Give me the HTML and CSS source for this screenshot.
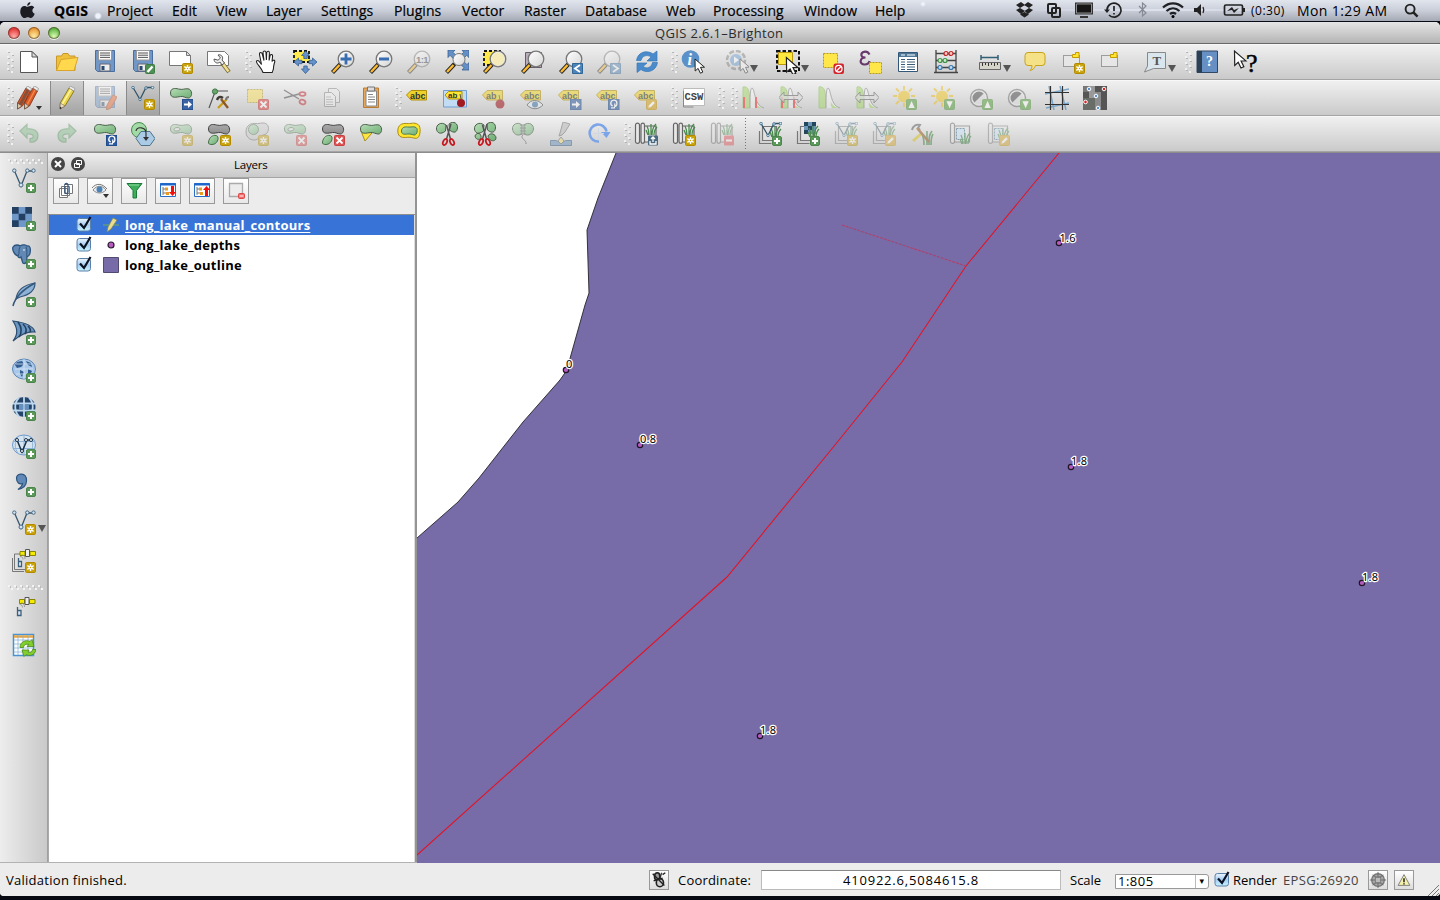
FILE: index.html
```html
<!DOCTYPE html>
<html lang="en">
<head>
<meta charset="utf-8">
<title>QGIS 2.6.1-Brighton</title>
<link rel="stylesheet" href="styles.css">
</head>
<body>
<svg class="sprite" aria-hidden="true">
<defs>
<linearGradient id="gr" x1="0" y1="0" x2="1" y2="1"><stop offset="0" stop-color="#b4dcb4"/><stop offset="1" stop-color="#6fae74"/></linearGradient>
<linearGradient id="gy" x1="0" y1="0" x2="0" y2="1"><stop offset="0" stop-color="#aaa"/><stop offset="1" stop-color="#8e8e8e"/></linearGradient>
<linearGradient id="lens" x1="0" y1="0" x2="1" y2="1"><stop offset="0" stop-color="#fff"/><stop offset="1" stop-color="#d4d6d4"/></linearGradient>
<linearGradient id="chk" x1="0" y1="0" x2="0" y2="1"><stop offset="0" stop-color="#eef6fd"/><stop offset=".5" stop-color="#a5cdf3"/><stop offset="1" stop-color="#c9f2ff"/></linearGradient>
<g id="b-star"><rect x="13.5" y="13.5" width="10" height="10" rx="1.2" fill="#c9a20c" stroke="#b18a00"/><path d="M18.5 15v7M15.3 16.7l6.4 3.6M15.3 20.3l6.4-3.6" stroke="#fff" stroke-width="1.4"/><circle cx="18.5" cy="18.5" r="1.9" fill="#fff"/><circle cx="18.5" cy="18.5" r=".7" fill="#c9a20c"/></g>
<g id="b-plus"><rect x="14.5" y="14.5" width="9" height="9" rx="1.5" fill="#5c9a5c" stroke="#4b854b"/><path d="M19 16v6M16 19h6" stroke="#fff" stroke-width="2"/></g>
<g id="b-x"><rect x="13.5" y="13.5" width="10" height="10" rx="1" fill="#dd5252" stroke="#c94040"/><path d="M15.5 15.5l6 6M21.5 15.5l-6 6" stroke="#fff" stroke-width="1.8"/></g>
<g id="b-pen"><rect x="13.5" y="13.5" width="10" height="10" rx="1" fill="#d9a520" stroke="#c49513"/><path d="M15.3 21.8l.8-2.5 4-4 1.7 1.7-4 4z" fill="#fff"/></g>
<g id="b-arr"><rect x="13.5" y="13.5" width="10.5" height="10" fill="#3a63a6" stroke="#27508f"/><path d="M15 17.5h4v-2.5l4 3.5-4 3.500v-2.500h-4z" fill="#fff"/></g>
<g id="b-rot"><rect x="13.5" y="13.500" width="10.500" height="10" fill="#2f5ba0" stroke="#214c8c"/><path d="M16 21.800h4M21.800 17.500a3 3 0 1 0-4 2.500M21.800 17.500a2.500 2.500 0 0 1-2 3v-3" fill="none" stroke="#fff" stroke-width="1.300"/></g>
<g id="b-up"><rect x="13.500" y="13.500" width="10" height="10" rx="1" fill="#62a34a" stroke="#5b9a44"/><path d="M15.500 22h6.200l-3.100-7z" fill="#fff"/></g>
<g id="b-dn"><rect x="13.500" y="13.500" width="10" height="10" rx="1" fill="#62a34a" stroke="#5b9a44"/><path d="M15.500 15.200h6.200l-3.100 7z" fill="#fff"/></g>
<path id="blob" d="M1.500 6c0-5 4.500-5 8-4 4 1.200 6-.6 9.500-.2 5 .6 4.500 9.200.3 9.200-3.300 0-4.300-2-7.800-1.500S1.500 12 1.500 6z"/>
<path id="hole" fill-rule="evenodd" d="M1.500 6c0-5 4.500-5 8-4 4 1.200 6-.6 9.500-.2 5 .6 4.500 9.200.3 9.200-3.300 0-4.300-2-7.800-1.500S1.500 12 1.500 6zM5 6.500c0 2.500 6 1.500 6-.5s-6-2-6 .5z"/>
<path id="leaf" d="M1.500 20c1-5 4-7 7.500-6.500 4 .6 2 9-4 9-2.500 0-3.700-.5-3.500-2.500z"/>
<path id="cursor" d="M0 0l.2 12 2.900-2.600 2.300 4.800 2.400-1.100-2.300-4.800 4-.1z" fill="#fff" stroke="#222" stroke-width="1"/>
<g id="glass"><path d="M9.500 14l-8 8.500" stroke="#222" stroke-width="4.200"/><path d="M8.500 15l-6.500 7" stroke="#fdbb30" stroke-width="2.400"/><circle cx="15" cy="9" r="7.800" fill="url(#lens)" stroke="#777" stroke-width="1.300"/></g>
<g id="floppy"><path d="M2.500.5h19v21h-17l-2-2z" fill="#7097c6" stroke="#4a6e9f"/><path d="M5.500.5h13v9.500h-13z" fill="#fafafa" stroke="#999"/><path d="M7 3h10M7 5.200h10M7 7.400h10" stroke="#555"/><path d="M7 14h10v7h-10z" fill="#eee" stroke="#667"/><path d="M8.500 16h3v4h-3z" fill="#29496f"/></g>
<g id="pencil"><path d="M14 2l5 3-9 15-5 3 .3-6z" fill="#e9d34b" stroke="#776817" stroke-width=".8"/><path d="M16 3.500L7 18.500" stroke="#fff4a0" stroke-width="1.500"/><path d="M14 2l1-2 5 2.500-1 2.500z" fill="#eee" stroke="#888" stroke-width=".6"/><path d="M5.300 17l4.700 3-5 3z" fill="#e8dbb8" stroke="#766" stroke-width=".6"/><path d="M5 20.800v2.200l1.800-1z" fill="#222"/></g>
<g id="vee"><path d="M2.500 3L9 18 15 3h6.500" fill="none" stroke="#39586f" stroke-width="1.300"/><g fill="#d9e5ee" stroke="#456a88"><circle cx="2.300" cy="2.600" r="1.700"/><circle cx="9" cy="17" r="2"/><circle cx="15.300" cy="2.600" r="1.700"/><circle cx="21.500" cy="2.600" r="1.700"/></g></g>
<g id="smallvee"><path d="M2 1.500l7 12 6-12h6.500" fill="none" stroke="#315468" stroke-width="1.300"/><g fill="#d9e5ee" stroke="#31678a" stroke-width=".8"><circle cx="2" cy="1.500" r="1.300"/><circle cx="9" cy="13.500" r="1.200"/><circle cx="15" cy="2" r="1.300"/><circle cx="21.500" cy="1.500" r="1.300"/></g></g>
<g id="grass"><path d="M15 13c0-5-1-7-2-9M17 13V2M18 13c0-5 1-8 4-11M20 13c0-3 1-6 3-8M14 13l-2-5" fill="none" stroke="#4a8a4e" stroke-width="1.300"/></g>
<g id="tagshape"><path d="M1.500 9L6 4.500h15.500v9.500H6z" fill="#ecd22a" stroke="#b09006"/></g>
<g id="frames"><path d="M1.500 9v12.500h12" fill="none" stroke="#777" stroke-width="1.200"/><path d="M4.500 4.500h14v14h-14z" fill="#e5e5e5" fill-opacity=".5" stroke="#777" stroke-width="1.200"/></g>
<g id="scroll"><path d="M6.500 4h15v16h-15z" fill="#e7e7e7" stroke="#777" stroke-width="1.200"/><path d="M2.500 3c0-2.500 4-2.500 4 0v16.500c0 2.500-4 2.500-4 0z" fill="#e7e7e7" stroke="#777" stroke-width="1.200"/></g>
<g id="scroll2"><path d="M10 4h12v16H8" fill="#e7e7e7" stroke="#666" stroke-width="1.200"/><path d="M1.500 3c0-2.500 4-2.500 4 0v16.500c0 2.500-4 2.500-4 0zM7 3c0-2.500 3.500-2.500 3.500 0v16c0 3-3.500 3-3.500 0z" fill="#e7e7e7" stroke="#666" stroke-width="1.200"/></g>
<g id="hist"><path d="M2 22V1c4-1 6 2 6.500 9L9 22z" fill="#a9d873" stroke="#8fc060"/><path d="M9 22c0-9 0-20 2-20 3 0 2 18 12 20" fill="#fff" fill-opacity=".6" stroke="#8a8a8a"/><path d="M15 22c-2-4-1-6-1-6s2 5 8 6z" fill="#a9d873"/></g>
<path id="dbl" d="M0 11.500L5 6v3.500h14V6l5 5.500L19 17v-3.500H5V17z" fill="#ddd" fill-opacity=".7" stroke="#666"/>
<g id="sun"><path d="M11 0v4M11 17v4M0 10h4M18 10h4M3 2.500l3 3M19 2.500l-3 3M3 18l3-3" stroke="#ecc028" stroke-width="1.800"/><circle cx="11" cy="10.500" r="6" fill="#f0c831"/></g>
<g id="contrast"><circle cx="10" cy="12" r="8.500" fill="#eee" stroke="#777" stroke-width="1.500"/><circle cx="10" cy="12" r="6.500" fill="#ddd"/><path d="M14.600 7.400A6.500 6.500 0 1 0 5.400 16.600z" fill="#555"/></g>
<g id="scissors"><path d="M9.500 3l4 14M14 2l-4.500 15" stroke="#555" stroke-width="1.500"/><g fill="none" stroke="#c71820" stroke-width="1.800"><ellipse cx="8" cy="20" rx="1.800" ry="3.200" transform="rotate(25 8 20)"/><ellipse cx="15" cy="20" rx="1.800" ry="3.200" transform="rotate(-25 15 20)"/></g></g>
<g id="sat"><path d="M8 3.500h5v4H8zM18 3.500h5.500v4H18z" fill="#f4eb00" stroke="#8a8500"/><path d="M13.500 1.500h4v7h-4z" fill="#eee" stroke="#555"/><path d="M8 8.500c2 0 3 1 3 3M9.500 7c3 0 3.500 2 3.500 4" fill="none" stroke="#888" stroke-width=".8"/></g>
<g id="gridp" fill="#f0f0f0"><path d="M0 0h2v2H0zM4 3h2v2H4zM0 6h2v2H0zM4 9h2v2H4zM0 12h2v2H0zM4 15h2v2H4zM0 18h2v2H0zM4 21h2v2H4z"/><path fill="#b4b4b4" d="M1 2h2v1H1zM5 5h2v1H5zM1 8h2v1H1zM5 11h2v1H5zM1 14h2v1H1zM5 17h2v1H5zM1 20h2v1H1z"/></g>
</defs>
<symbol id="i-grip" viewBox="0 0 7 24"><use href="#gridp"/></symbol>
<symbol id="i-hgrip" viewBox="0 0 36 6"><path d="M0 0h2v2H0zM6 0h2v2H6zM12 0h2v2h-2zM18 0h2v2h-2zM24 0h2v2h-2zM30 0h2v2h-2zM3 3h2v2H3zM9 3h2v2H9zM15 3h2v2h-2zM21 3h2v2h-2zM27 3h2v2h-2zM33 3h2v2h-2z" fill="#f4f4f4"/><path d="M2 1h1v2H2zM8 1h1v2H8zM14 1h1v2h-1zM20 1h1v2h-1zM26 1h1v2h-1zM32 1h1v2h-1z" fill="#bbb"/></symbol>
<symbol id="i-new" viewBox="0 0 24 24"><path d="M3.500 1.500h11.500l5.500 5.500v15.500h-17z" fill="#fff" stroke="#555"/><path d="M15 1.500V7h5.500z" fill="#ddd" stroke="#555"/></symbol>
<symbol id="i-open" viewBox="0 0 24 24"><path d="M1.500 20.500V6h5l1.500-2.500h5L14.500 6H20v14.500z" fill="#eec03c" stroke="#c9982d"/><path d="M1.500 20.500L6 9.500l17-2-4 13z" fill="#ffd84e" stroke="#d9a52c"/></symbol>
<symbol id="i-save" viewBox="0 0 24 24"><use href="#floppy"/></symbol>
<symbol id="i-saveas" viewBox="0 0 24 24"><use href="#floppy"/><rect x="14.500" y="14.500" width="9" height="9" rx="1" fill="#4f9155" stroke="#3e7a45"/><path d="M16.500 22l5-5.500" stroke="#fff" stroke-width="2.400"/></symbol>
<symbol id="i-composer" viewBox="0 0 24 24"><path d="M.5 1.500h17l4 4v10h-21z" fill="#fff" stroke="#777"/><path d="M17.500 1.500v4h4z" fill="#ddd" stroke="#777"/><use href="#b-star"/></symbol>
<symbol id="i-manager" viewBox="0 0 24 24"><path d="M.5 1.500h17l4 4v10h-21z" fill="#fff" stroke="#777"/><path d="M15 13l7 9" stroke="#7c6d32" stroke-width="4.200"/><path d="M16 14l5.500 7.500" stroke="#eedc90" stroke-width="2.500"/><path d="M7 9c0 4 4 5 6 3l2 3 2.500-2-2.500-3c2-3-1-6-4-5l2.500 3-2.500 2.200z" fill="#eee" stroke="#555"/></symbol>
<symbol id="i-pan" viewBox="0 0 24 24"><path d="M8 22.500c-1-4-6-8-6.500-10.500-.3-2 2-2 3.500.5l1.500 2L4.500 4.500c-.3-2.500 2.200-2.500 2.800-.5L8 2.500c.3-2 2.700-2 3 0L11.500 2c.6-1.600 2.600-1.300 2.800.5l.2 2.500c.8-1.600 3-1 2.800.7l-.2 3.800c1-1.600 3-.8 2.500 1-1 3.500-1.300 4.500-1.300 7 0 2-1 3.500-1.300 5z" fill="#fff"/><path d="M8 22.500c-1-4-6-8-6.500-10.500-.3-2 2-2 3.500.5l1.500 2L4.500 4.500c-.3-2.500 2.200-2.500 2.800-.5l1.700 6.500L8 2.500c.3-2 2.700-2 3 0l.4 7.500.3-7.500c.6-1.800 2.600-1.500 2.700.3l-.3 7.700 1-5c.8-1.600 2.700-1 2.500.7l-.6 5.300c1-2 3.300-1.800 2.700.5-.8 3-1.200 4-1.200 6 0 2-1 3-1.300 4.500z" fill="none" stroke="#222" stroke-width="1.100"/></symbol>
<symbol id="i-pansel" viewBox="0 0 24 24"><path d="M1 1h15v11H1z" fill="#ffe94d" stroke="#111" stroke-width="1.800" stroke-dasharray="3 2"/><path d="M12.500 1l4 4.500h-2.300v3h-3.400v-3H8.500zM12.500 23.500l-4-4.500h2.300v-3h3.400v3h2.300zM1 12l4.500-4v2.300h3.500v3.400H5.500V16zM24 12l-4.500-4v2.300H16v3.400h3.500V16z" fill="#6793ca" stroke="#345f95" stroke-width=".8"/></symbol>
<symbol id="i-zin" viewBox="0 0 24 24"><use href="#glass"/><path d="M15 3.500v11M9.500 9h11" stroke="#386db1" stroke-width="2.800"/></symbol>
<symbol id="i-zout" viewBox="0 0 24 24"><use href="#glass"/><path d="M10 9h10" stroke="#386db1" stroke-width="2.800"/></symbol>
<symbol id="i-zfull" viewBox="0 0 24 24"><path d="M3 0h7L8 2.300l4 4-3 3-4-4L3 7.500zM24 0v7.500l-2.300-2.200-4 4-3-3 4-4L17 0zM24 20h-7l2-2.300-4-4 3-3 4 4 2-2.200z" fill="#6590c6" stroke="#375f93" stroke-width=".8"/><path d="M9.500 14l-8 8.500" stroke="#222" stroke-width="4.200"/><path d="M8.500 15l-6.500 7" stroke="#fdbb30" stroke-width="2.400"/><circle cx="14" cy="9.500" r="6" fill="url(#lens)" stroke="#777"/></symbol>
<symbol id="i-zsel" viewBox="0 0 24 24"><path d="M1 1h16v14H1z" fill="#ffe84a" stroke="#111" stroke-width="1.800" stroke-dasharray="3 2"/><use href="#glass"/><circle cx="15" cy="9" r="6.500" fill="#f4ebb9"/></symbol>
<symbol id="i-zlay" viewBox="0 0 24 24"><path d="M4.500 2.500h16v15h-16z" fill="#b8adb8" stroke="#675b68"/><use href="#glass"/></symbol>
<symbol id="i-zlast" viewBox="0 0 24 24"><use href="#glass"/><path d="M13.500 13.500h10v10h-10z" fill="#4c83b8" stroke="#316797"/><path d="M21 15l-5 3.500 5 3.500" fill="none" stroke="#fff" stroke-width="1.800"/></symbol>
<symbol id="i-znext" viewBox="0 0 24 24"><use href="#glass"/><path d="M13.500 13.500h10v10h-10z" fill="#4c83b8" stroke="#316797"/><path d="M16 15l5 3.500-5 3.500" fill="none" stroke="#fff" stroke-width="1.800"/></symbol>
<symbol id="i-refresh" viewBox="0 0 24 24"><path d="M1.500 10.500C3 1 13 0 18 4l4-3v10h-10l4-4c-4-3-9-1-10 3.500zM22.500 12.500C21 22 11 23.500 6 19.500l-4 3v-9.500h10l-4 3.500c4 3 8.500 1 9.500-4z" fill="#4a8bcb" stroke="#3879b8" stroke-width=".7"/></symbol>
<symbol id="i-ident" viewBox="0 0 24 24"><circle cx="9.500" cy="9" r="8.800" fill="#5b91c9"/></symbol>
<symbol id="i-action" viewBox="0 0 24 24"><circle cx="11" cy="10" r="9" fill="#ddd" stroke="#777" stroke-width="2.500" stroke-dasharray="5 2"/><circle cx="11" cy="10" r="6" fill="#5d95d0"/><path d="M9 6.500v7l5-3.500z" fill="#fff"/><use href="#cursor" x="15" y="9"/></symbol>
<symbol id="i-select" viewBox="0 0 26 24"><path d="M2 1h22v20H2z" fill="#ddd" stroke="#111" stroke-width="2" stroke-dasharray="3.500 2"/><path d="M3.500 2.500h14v12h-14z" fill="#ffe840" stroke="#bb990c"/><use href="#cursor" x="12" y="8" transform="translate(-3 -2) scale(1.200)"/></symbol>
<symbol id="i-desel" viewBox="0 0 24 24"><path d="M3.500 3.500h14v14h-14z" fill="#ffe74a" stroke="#b99a17" stroke-dasharray="2 1"/><rect x="13.500" y="13.500" width="10.500" height="10.500" rx="2" fill="#d3232d"/><circle cx="18.700" cy="18.700" r="3.300" fill="none" stroke="#fff" stroke-width="1.300"/><path d="M16.500 21l4.500-4.500" stroke="#fff" stroke-width="1.300"/></symbol>
<symbol id="i-expr" viewBox="0 0 24 24"><path d="M11.500 4.500C9 0 2.500 1.500 3.500 5.500c.5 1.700 2.500 2 4 2C2 7.500.8 14 6 14.500c3 .2 5-1.500 5.500-3.500" fill="none" stroke="#69386d" stroke-width="2.200"/><path d="M11.500 12.500h12v11h-12z" fill="#ffe74a" stroke="#b99a17" stroke-dasharray="2 1"/></symbol>
<symbol id="i-table" viewBox="0 0 24 24"><path d="M2.500 2.500h19v19h-19z" fill="#fff" stroke="#335777"/><path d="M3 3h18v4H3z" fill="#4d7797"/><path d="M5 5h4M11 5h8" stroke="#fff"/><path d="M5 9.500h4M5 12h4M5 14.500h4M5 17h4M5 19.500h4M11 9.500h8M11 12h8M11 14.500h8M11 17h8M11 19.500h8" stroke="#3a5c78" stroke-width="1.200"/></symbol>
<symbol id="i-abacus" viewBox="0 0 24 24"><path d="M2 0v23M22 0v23M0 22.500h24M2 3.500h20M2 10.500h20M2 17.500h20" stroke="#444" stroke-width="1.300"/><g stroke-width="1.200"><g fill="#f7c8c8" stroke="#bf2525"><circle cx="12" cy="3.500" r="2"/><circle cx="17" cy="3.500" r="2"/></g><g fill="#c8edc8" stroke="#409146"><circle cx="6" cy="10.500" r="2"/><circle cx="11" cy="10.500" r="2"/></g><g fill="#bddcf4" stroke="#3c78aa"><circle cx="6" cy="17.500" r="2"/><circle cx="17" cy="17.500" r="2"/></g></g></symbol>
<symbol id="i-measure" viewBox="0 0 24 24"><path d="M3 7.500h17M3 5v5M20 5v5" stroke="#335f74" stroke-width="1.500"/><path d="M1.500 12.500h21v7h-21z" fill="#d5d5c9" stroke="#666"/><path d="M4.500 13v3M7.500 13v2M10.500 13v3M13.500 13v2M16.500 13v3M19.500 13v2" stroke="#333"/></symbol>
<symbol id="i-tips" viewBox="0 0 24 24"><path d="M5 2.500h14q3 0 3 3v7q0 3-3 3h-6.500c-1 3-3 4.500-5.500 5 1.500-1.500 2-3 2-5H5q-3 0-3-3v-7q0-3 3-3z" fill="#f5e287" stroke="#c6a31a"/></symbol>
<symbol id="i-bmnew" viewBox="0 0 24 24"><path d="M2.500 5.500h16v11h-16z" fill="#e6e6e6" stroke="#555" stroke-dasharray="1 1"/><path d="M11.500 7.500v-3h3v-2h3.500v5z" fill="#ffe52f" stroke="#c49b00"/><use href="#b-star"/></symbol>
<symbol id="i-bm" viewBox="0 0 24 24"><path d="M2.500 5.500h16v11h-16z" fill="#e6e6e6" stroke="#555" stroke-dasharray="1 1"/><path d="M11.500 7.500v-3h3v-2h3.500v5z" fill="#ffe52f" stroke="#c49b00"/></symbol>
<symbol id="i-annot" viewBox="0 0 24 24"><path d="M4.500 2.500h18v16h-12l-9 3.500 3-6z" fill="#dae6ee" stroke="#888"/></symbol>
<symbol id="i-help" viewBox="0 0 24 24"><path d="M2 1h20.500v21.500H2z" fill="#6690c4" stroke="#304765"/><path d="M2 1h5v21.500H2z" fill="#2b3f55"/></symbol>
<symbol id="i-edits" viewBox="0 0 24 24"><g transform="translate(-1 0)"><path d="M10 2l4.500 3-8 15-5 3v-6zM17 2l4.500 3-8 15-5 3v-6z" fill="#da5828" stroke="#773018" stroke-width=".8"/><path d="M12 4L4 19" stroke="#875037" stroke-width="3"/><path d="M19 4l-8 15" stroke="#f28849" stroke-width="1.500"/><path d="M10 2l1.500-2 4 2.500-1 2.500zM17 2l1.500-2 4 2.500-1 2.500z" fill="#eee" stroke="#777" stroke-width=".6"/><path d="M1.500 17l4.500 3-4.500 3zM8.500 17l4.500 3-4.500 3z" fill="#dcc6a3" stroke="#544" stroke-width=".6"/></g></symbol>
<symbol id="i-toggle" viewBox="0 0 24 24"><use href="#pencil"/></symbol>
<symbol id="i-saveed" viewBox="0 0 24 24"><use href="#floppy"/><path d="M20 9l4 2-6 11-4.500 2 .5-5z" fill="#f0622a" stroke="#a54720"/></symbol>
<symbol id="i-addline" viewBox="0 0 24 24"><use href="#smallvee"/><use href="#b-star"/></symbol>
<symbol id="i-movef" viewBox="0 0 24 24"><use href="#blob" y="1" fill="url(#gr)" stroke="#4b5f4b"/><use href="#b-arr"/></symbol>
<symbol id="i-node" viewBox="0 0 24 24"><path d="M2 22L8 6M8 5h13" stroke="#555" stroke-width="1.200"/><circle cx="8" cy="5.500" r="2.600" fill="#6aa66c" stroke="#3d7742"/><path d="M11 22l9-9" stroke="#c99b19" stroke-width="2.300"/><path d="M19 14c0-2 1-3 3-3" fill="none" stroke="#777" stroke-width="2"/><path d="M10 14c1-3 3-4 6-2" fill="none" stroke="#3f3a36" stroke-width="2.500"/><path d="M14 13l7 9" stroke="#8a5728" stroke-width="2.300"/></symbol>
<symbol id="i-del" viewBox="0 0 24 24"><path d="M2.500 3.500h15v13h-15z" fill="#f8e06b" stroke="#b39a35" stroke-dasharray="2 1"/><use href="#b-x"/></symbol>
<symbol id="i-cut" viewBox="0 0 24 24"><path d="M1 4l15 9M1 12l15-4" stroke="#555" stroke-width="1.400"/><g fill="none" stroke="#c53b43" stroke-width="1.800"><ellipse cx="19.500" cy="8" rx="3" ry="1.900"/><ellipse cx="19.500" cy="16" rx="3" ry="2.200" transform="rotate(20 19.500 16)"/></g></symbol>
<symbol id="i-copy" viewBox="0 0 24 24"><path d="M7.500 2.500h8l3 3v11h-11z" fill="#eee" stroke="#777"/><path d="M3.500 6.500h7l4 4v10h-11z" fill="#f4f4f4" stroke="#777"/><path d="M5 11h5M5 13.500h7M5 16h7M5 18.500h7" stroke="#999"/></symbol>
<symbol id="i-paste" viewBox="0 0 24 24"><path d="M4.500 2h15v19.500h-15z" fill="#e5a65a" stroke="#bc7b32"/><path d="M7 5h10.500v15H7z" fill="#fff" stroke="#888"/><path d="M8.500 1h7v4h-7z" fill="#ddd" stroke="#777"/><path d="M9 8.500h5M9 11h7M9 13.500h7M9 16h7" stroke="#888"/></symbol>
<symbol id="i-abc" viewBox="0 0 24 24"><use href="#tagshape"/></symbol>
<symbol id="i-abpin" viewBox="0 0 24 24"><path d="M.5 4.500h23v16.500H.5z" fill="#c1dcf3" stroke="#6f9ed0"/><path d="M2 9l3.500-3.500H19V13H5.500z" fill="#ffe630" stroke="#b09006"/><circle cx="18" cy="17" r="4" fill="#a21920"/><path d="M18 13l-1-5" stroke="#555"/></symbol>
<symbol id="i-abpin2" viewBox="0 0 24 24"><use href="#tagshape"/><circle cx="19" cy="18" r="4.500" fill="#a21920"/><path d="M19 14l-1-5" stroke="#555"/></symbol>
<symbol id="i-eye" viewBox="0 0 24 24"><path d="M8 19c4-6 11-6 16 0-5 5-11 5-16 0z" fill="#e6eef5" stroke="#555"/><circle cx="16" cy="18.500" r="3" fill="#4c7ba8"/></symbol>
<symbol id="i-csw" viewBox="0 0 24 24"><path d="M2.500 2.500h21v17h-21z" fill="#fff" stroke="#bbb"/><path d="M2.500 5v16h10" fill="none" stroke="#888"/></symbol>
<symbol id="i-h1" viewBox="0 0 24 24"><use href="#hist"/><path d="M3 22V11M15 22V11" stroke="#e33" stroke-width="2"/></symbol>
<symbol id="i-h2" viewBox="0 0 24 24"><use href="#hist"/><path d="M3 22V11M15 22V11" stroke="#e33" stroke-width="2"/><use href="#dbl"/></symbol>
<symbol id="i-h3" viewBox="0 0 24 24"><use href="#hist"/></symbol>
<symbol id="i-h4" viewBox="0 0 24 24"><use href="#hist"/><use href="#dbl"/></symbol>
<symbol id="i-sunup" viewBox="0 0 24 24"><use href="#sun"/><use href="#b-up"/></symbol>
<symbol id="i-sundn" viewBox="0 0 24 24"><use href="#sun"/><use href="#b-dn"/></symbol>
<symbol id="i-conup" viewBox="0 0 24 24"><use href="#contrast"/><use href="#b-up"/></symbol>
<symbol id="i-condn" viewBox="0 0 24 24"><use href="#contrast"/><use href="#b-dn"/></symbol>
<symbol id="i-georef" viewBox="0 0 24 24"><path d="M0 8l24-5M1 22l23-5M4 0l5 24M15 0l6 24" stroke="#79a6c8" stroke-width="1.500"/><path d="M0 6.500h24M0 18.500h24M5.500 0v24M17.500 0v24" stroke="#333" stroke-width="1.200"/></symbol>
<symbol id="i-heat" viewBox="0 0 24 24"><path d="M0 0h24v24H0z" fill="#777"/><path d="M6 0h6v12H6z" fill="#999"/><path d="M12 0h12v6H12zM0 6h6v6H0zM18 6h6v18h-6z" fill="#555"/><path d="M0 12h12v12H0z" fill="#686d68"/><path d="M12 6h6v18h-6z" fill="#8b8b8b"/><g stroke="#fff"><g fill="#5b93cf"><circle cx="6" cy="3" r="1.800"/><circle cx="13" cy="10" r="1.800"/><circle cx="15" cy="22" r="1.800"/></g><g fill="#d22"><circle cx="21" cy="3" r="1.800"/><circle cx="2.500" cy="16" r="1.800"/></g></g></symbol>
<symbol id="i-undo" viewBox="0 0 24 24"><path d="M3 9l7-6.500V7c7-1 11 2 11 7 0 4-3 6.500-8 6v-3.500c5 0 4.500-5-3-4.500v4z" fill="#7cba83" stroke="#529258" stroke-width="1.200"/></symbol>
<symbol id="i-redo" viewBox="0 0 24 24"><path d="M21 9l-7-6.500V7C7 6 3 9 3 14c0 4 3 6.500 8 6v-3.500c-5 0-4.500-5 3-4.500v4z" fill="#7cba83" stroke="#529258" stroke-width="1.200"/></symbol>
<symbol id="i-rotf" viewBox="0 0 24 24"><use href="#blob" y="1" fill="url(#gr)" stroke="#4b5f4b"/><use href="#b-rot"/></symbol>
<symbol id="i-simp" viewBox="0 0 24 24"><circle cx="8" cy="8" r="7.500" fill="#a3dba6" stroke="#4d8952"/><path d="M10 9.500h9l5 7-5 7h-9l-5-7z" fill="#aacbe5" stroke="#4f7189"/><path d="M5 9c1-5 10-4 10 2v5" fill="none" stroke="#333" stroke-width="1.200"/><path d="M12 15h6l-3 4z" fill="#333"/></symbol>
<symbol id="i-ring" viewBox="0 0 24 24"><use href="#hole" y="1" fill="url(#gr)" stroke="#4b5f4b"/><use href="#b-star"/></symbol>
<symbol id="i-part" viewBox="0 0 24 24"><use href="#blob" y="1" fill="url(#gy)" stroke="#444"/><use href="#leaf" fill="url(#gr)" stroke="#466c48"/><use href="#b-star"/></symbol>
<symbol id="i-fillring" viewBox="0 0 24 24"><path d="M1 10C1 3 6 1 11 1.500c4 .5 8-2 11 1s1 9-2 10-5 1-7 4-12 2-12-6.500z" fill="#ccc" stroke="#666"/><circle cx="8.500" cy="7.500" r="5" fill="url(#gr)" stroke="#466c48"/><use href="#b-star"/></symbol>
<symbol id="i-delring" viewBox="0 0 24 24"><use href="#hole" y="1" fill="url(#gr)" stroke="#4b5f4b"/><use href="#b-x"/></symbol>
<symbol id="i-delpart" viewBox="0 0 24 24"><use href="#blob" y="1" fill="url(#gy)" stroke="#444"/><use href="#leaf" fill="url(#gr)" stroke="#466c48"/><use href="#b-x"/></symbol>
<symbol id="i-reshape" viewBox="0 0 24 24"><path d="M2 9l4 10 7-8z" fill="#ffe540" stroke="#ad8e12"/><use href="#blob" y="1" fill="url(#gr)" stroke="#4b5f4b"/></symbol>
<symbol id="i-offset" viewBox="0 0 24 24"><path d="M.8 9c0-6 4-8 9-7.500 4 .5 7-1.500 11 .8s2.500 14-1.500 14-5-1.500-9-1S.8 16 .8 9z" fill="#ffe52e" stroke="#a98b14"/><path d="M4.500 9c0-3 2.500-4.500 6-4s6-1 8.500.5 1 7.500-1.500 7.500-4-1.500-7-1-6 .5-6-3z" fill="url(#gr)" stroke="#4b7a4f"/></symbol>
<symbol id="i-splitf" viewBox="0 0 24 24"><path d="M11 3C6-1 1 3 1.500 7s4 6 9 2zM14 2c5-4 9 0 8.500 4s-3 6-8 2z" fill="url(#gr)" stroke="#4b5f4b"/><use href="#scissors" x="2"/></symbol>
<symbol id="i-splitp" viewBox="0 0 24 24"><path d="M11 3C6-1 1 3 1.500 7s4 6 9 2zM14 2c5-4 9 0 8.500 4s-3 6-8 2zM2 14c1-3 5-4 6 0s-5 5-6 0zM15 14c2-4 8-2 8 2s-7 4-8-2z" fill="url(#gr)" stroke="#4b5f4b"/><use href="#scissors"/></symbol>
<symbol id="i-merge" viewBox="0 0 24 24"><path d="M11 3C6-1 1 3 1.500 7s4 8 9.500 5zM13 3c5-4 10 0 9.500 4s-4 8-9.500 5z" fill="url(#gr)" stroke="#4b5f4b"/><path d="M9 3h6M9 6h6M9 9h6M9 12h6M12 13c-4 3 4 5 3 9" fill="none" stroke="#666"/></symbol>
<symbol id="i-mattr" viewBox="0 0 24 24"><path d="M14 0l7 2-5 8-3 3-3 1 1-3z" fill="#bbb" stroke="#777"/><path d="M1.500 18.500h6l3 2h3l3-2h6v5h-21z" fill="#7c9fc0" stroke="#4c6f90"/><path d="M12 15l3 4-3 3-3-3z" fill="#eee185" stroke="#777"/></symbol>
<symbol id="i-rotp" viewBox="0 0 24 24"><path d="M12 19.500a8.500 8.500 0 1 1 7.500-10" fill="none" stroke="#7ba5e8" stroke-width="2.600"/><path d="M14 10h9.500l-4 6z" fill="#7ba5e8"/><path d="M11.500 6v11M6 11.500h11" stroke="#cfd7e4"/></symbol>
<symbol id="i-gopen" viewBox="0 0 24 24"><use href="#scroll2"/><use href="#grass"/><rect x="14" y="13.500" width="10" height="10" rx="1" fill="#496a80"/><path d="M16 19v3h6v-3M19 20v-5M17 17l2-2 2 2" fill="none" stroke="#fff" stroke-width="1.300"/></symbol>
<symbol id="i-gnew" viewBox="0 0 24 24"><use href="#scroll2"/><use href="#grass"/><use href="#b-star"/></symbol>
<symbol id="i-gclose" viewBox="0 0 24 24"><use href="#scroll2"/><use href="#grass"/><rect x="14" y="13.500" width="10" height="10" rx="1" fill="#e44c52"/><path d="M16 18.500h6" stroke="#fff" stroke-width="2"/></symbol>
<symbol id="i-gvec" viewBox="0 0 24 24"><use href="#frames"/><use href="#grass" y="2"/><use href="#smallvee" x="1"/><use href="#b-plus"/></symbol>
<symbol id="i-gras" viewBox="0 0 24 24"><use href="#frames"/><path d="M8 0h12v12H8z" fill="#6c98b7"/><path d="M8 0h4v4H8zM16 0h4v4h-4zM12 4h4v4h-4zM8 8h4v4H8z" fill="#24475e"/><use href="#grass" y="2"/><use href="#b-plus"/></symbol>
<symbol id="i-gvnew" viewBox="0 0 24 24"><use href="#frames"/><use href="#grass" y="2"/><use href="#smallvee" x="1"/><use href="#b-star"/></symbol>
<symbol id="i-gvedit" viewBox="0 0 24 24"><use href="#frames"/><use href="#grass" y="2"/><use href="#smallvee" x="1"/><use href="#b-pen"/></symbol>
<symbol id="i-gtools" viewBox="0 0 24 24"><path d="M14 23c0-7-1-9-2-11M17 23V9M19 23c0-7 0-10 3-14M21 23c0-5 0-8 2-11" fill="none" stroke="#4a8a4e" stroke-width="1.600"/><path d="M3 19l9-8" stroke="#d9c434" stroke-width="3"/><path d="M2 8c1-4 4-6 8-5l-2 3 2 2" fill="none" stroke="#666" stroke-width="2"/><path d="M7 6l12 14" stroke="#96622e" stroke-width="2.600"/></symbol>
<symbol id="i-gregion" viewBox="0 0 24 24"><use href="#scroll"/><path d="M8.500 6.500h8v11h-8z" fill="#cde2f3" stroke="#44718f" stroke-dasharray="2 1"/><use href="#grass" y="9"/></symbol>
<symbol id="i-gredit" viewBox="0 0 24 24"><use href="#scroll"/><path d="M8.500 6.500h8v11h-8z" fill="#cde2f3" stroke="#44718f" stroke-dasharray="2 1"/><use href="#grass" y="4"/><use href="#b-pen"/></symbol>
<symbol id="s-vec" viewBox="0 0 24 26"><use href="#vee"/><use href="#b-plus" y="1"/></symbol>
<symbol id="s-ras" viewBox="0 0 24 26"><path d="M0 1h20v20H0z" fill="#6f98c8"/><path d="M0 1h6.700v6.700H0zM13.300 1H20v6.700h-6.700zM6.700 7.700h6.600v6.600H6.700zM0 14.300h6.700V21H0z" fill="#233f62"/><use href="#b-plus" y="1"/></symbol>
<symbol id="s-pg" viewBox="0 0 24 26"><path d="M1 3c2-3 6-2 7-1 3-2 6-1 7 0 3-1 4 3 3 7 0 2-3 4-3 4l-.5 5c-1 2-4 2-4 0L9 13c-1 1-3 1-3-1-4-1-6-7-5-9z" fill="#6189b4" stroke="#2e557f" stroke-width="1.300"/><path d="M8 3c-2 3 0 6-2 9M14 3c2 4 0 7 1 10" fill="none" stroke="#2e557f"/><circle cx="12" cy="6" r=".8" fill="#fff"/><use href="#b-plus" y="1"/></symbol>
<symbol id="s-lite" viewBox="0 0 24 26"><path d="M4 17C5 9 11 3 23 1c0 7-6 12-15 14z" fill="#8db2d7" stroke="#35577b" stroke-width="1.200"/><path d="M1 24C3 15 12 7 23 1" fill="none" stroke="#35577b" stroke-width="1.500"/><use href="#b-plus" y="1"/></symbol>
<symbol id="s-ms" viewBox="0 0 24 26"><path d="M1 1c8 1 20 4 22 11-8-1-15 3-22 9 5-7 5-12 0-20z" fill="#6b97c5" stroke="#2b4c70" stroke-width="1.200"/><path d="M6 2c4 5 4 11 1 15M11 4c4 4 4 7 2 10M16 6c2 2 3 4 2 6" fill="none" stroke="#24425f" stroke-width="1.600"/><use href="#b-plus" y="1"/></symbol>
<symbol id="s-wms" viewBox="0 0 24 26"><ellipse cx="12" cy="11" rx="11.500" ry="10" fill="#a9c8e9" stroke="#5e88b8"/><path d="M5 4l5-1 2 3-3 3-4 1-2-3zM14 3l5 2 1 4-4-2zM8 12l4 2-2 5-2-3zM16 11l4 2-2 4-2-2z" fill="#335d91"/><path d="M3 11h18M12 1v20M4 6h16M4 16h16" stroke="#d6e6f5" stroke-width=".8"/><use href="#b-plus" y="1"/></symbol>
<symbol id="s-wcs" viewBox="0 0 24 26"><ellipse cx="12" cy="11" rx="11.500" ry="10" fill="#244569"/><path d="M7 1.700C2 7 2 15 7 20.300M17 1.700c5 5.300 5 13.300 0 18.600M12 1v20M1 7.500h22M1 14.500h22" fill="none" stroke="#bcd7f0" stroke-width="1.800"/><path d="M7 8.500h4.300v5H7zM12.700 8.500H17v5h-4.300z" fill="#6490c0"/><use href="#b-plus" y="1"/></symbol>
<symbol id="s-wfs" viewBox="0 0 24 26"><ellipse cx="12" cy="11" rx="11.500" ry="10" fill="#d7e5f1" stroke="#719acb"/><path d="M7 1.700C2 7 2 15 7 20.300M17 1.700c5 5.300 5 13.300 0 18.600M12 1v20M1 7.500h22M1 14.500h22" fill="none" stroke="#86aed7" stroke-width=".9"/><path d="M5 6l5 12 5-12h5" fill="none" stroke="#183046" stroke-width="1.500"/><g fill="#fff" stroke="#183046"><circle cx="5" cy="6" r="1.500"/><circle cx="10" cy="17" r="1.500"/><circle cx="14" cy="6" r="1.500"/><circle cx="19" cy="6" r="1.500"/></g><use href="#b-plus" y="1"/></symbol>
<symbol id="s-csv" viewBox="0 0 24 26"><path d="M4.500 6c0-5 10-6 10 2.500 0 5-4 8-8.500 9 2.500-2 4.500-4 4.500-6-3 1.500-6-1-6-5.500z" fill="#6089b7" stroke="#2d547f" stroke-width="1.200"/><use href="#b-plus" y="1"/></symbol>
<symbol id="s-vnew" viewBox="0 0 24 26"><use href="#vee"/><use href="#b-star" y="1"/></symbol>
<symbol id="s-gps" viewBox="0 0 24 26"><path d="M2.500 6v15.500H16M.5 10v13.500H12M2.500 6H10" fill="none" stroke="#777"/><path d="M6.500 13.500h3v5h-3zM6.500 10v4" fill="#eee" stroke="#39617d" stroke-width="1.300"/><use href="#sat"/><use href="#b-star" y="1"/></symbol>
<symbol id="s-gps2" viewBox="0 0 24 26"><path d="M5.500 15.500h3.500v5h-3.500zM5.500 12v4" fill="#dde" stroke="#39617d" stroke-width="1.300"/><use href="#sat" transform="translate(-.5 1)"/></symbol>
<symbol id="s-tbl" viewBox="0 0 24 26"><path d="M1.500 1.500h20v21h-20z" fill="#fff" stroke="#4993d4" stroke-width="1.500"/><path d="M2 3.500h19" stroke="#e6a543" stroke-width="2.500"/><path d="M2 7h19M2 11h19M2 15h19M2 19h19M6 2v20M11 2v20M16 2v20" stroke="#8bb4d7" stroke-width=".8"/><path d="M8 14.500c0-6 6-8 10-6l2-2 2 7h-7l2-2c-3-1-5 0-5.500 3zM24 16.500c-1 6-7 7-10 5l-2 2-2-6.500h7l-1 2c3 1 4 0 4.500-2.500z" fill="#81ce2c" stroke="#4b8914" stroke-width=".8"/></symbol>
<symbol id="i-check" viewBox="0 0 18 16"><rect x="1" y="2.500" width="13.500" height="12.500" rx="2.500" fill="url(#chk)" stroke="#5b80aa"/><path d="M4 7.500l4 4.500L14.500 1" fill="none" stroke="#0c1222" stroke-width="2.200"/></symbol>
</svg>

<header class="menubar">
  <svg class="apple" viewBox="0 0 16 18"><path d="M11 0c.3 2-1.500 4-3.300 4C7.500 2 9 .4 11 0zM8 5c1.500 0 2-1 4-1 1.300 0 2.500.7 3.200 1.700-2.900 1.800-2.500 5.500.5 6.800-.7 2-2.200 4.500-3.900 4.500-1.400 0-1.800-.8-3.500-.8s-2.200.8-3.500.8C2.500 17 0 13.500.3 9.500.5 6 2.500 4.200 4.700 4.200 6.200 4.200 7 5 8 5z" fill="#1c1d22"/></svg>
  <nav class="menus"><b>QGIS</b><span>Project</span><span>Edit</span><span>View</span><span>Layer</span><span>Settings</span><span>Plugins</span><span>Vector</span><span>Raster</span><span>Database</span><span>Web</span><span>Processing</span><span>Window</span><span>Help</span></nav>
  <svg class="tray" viewBox="0 0 240 20">
    <path d="M0 4l5-3 4 3-5 3zM8 4l4-3 5 3-4 3zM0 9l4-2 5 3-4 3zM8.500 10l4.500-3 4 2-5 4zM4 13.500l4.500-2.500 4.500 2.500-4.500 3z" fill="#222"/>
    <g fill="none" stroke="#222" stroke-width="2"><rect x="32" y="3" width="8" height="9" rx="1"/><rect x="36" y="7" width="8" height="9" rx="1"/></g>
    <path d="M59 1.500h18v12H59zM64 15h8v2h-8z" fill="#333"/><path d="M60.500 3h15v9h-15z" fill="#161616" stroke="#bbb" stroke-width=".7"/>
    <path d="M91 9a7 7 0 1 1 2 5M98 5v5M98 12v1.500" fill="none" stroke="#222" stroke-width="1.700"/><path d="M88 8.500h6L91 12z" fill="#222"/>
    <path d="M123 5l7 7-3.500 3V2l3.500 3-7 7" fill="none" stroke="#858a95" stroke-width="1.200"/>
    <g fill="none" stroke="#202126" stroke-width="2.300"><path d="M147 6.500c6-5.500 14-5.500 20 0M150.500 10c4-3.500 9-3.500 13 0M154 13c2-1.500 4-1.500 6 0"/></g><circle cx="157" cy="15.500" r="1.500"/>
    <path d="M178 7h3l4-4v12l-4-4h-3z" fill="#222"/><path d="M187 6c1 2 1 4 0 6" fill="none" stroke="#222" stroke-width="1.300"/>
    <rect x="208.500" y="4" width="18" height="10" rx="1.500" fill="none" stroke="#222" stroke-width="1.700"/><path d="M227 7h2v4h-2zM211 10l5-4 2 3 5-2-5 5-2-3z" fill="#222"/>
  </svg>
  <span class="batt">(0:30)</span><span class="clock">Mon 1:29 AM</span>
  <svg class="spot" viewBox="0 0 16 16"><circle cx="6.500" cy="6.500" r="4.800" fill="none" stroke="#222" stroke-width="2"/><path d="M10 10l4.500 4.500" stroke="#222" stroke-width="2.600"/></svg>
</header>

<div class="window">
<div class="titlebar"><i class="light red"></i><i class="light amber"></i><i class="light green"></i><span>QGIS 2.6.1–Brighton</span></div>

<div class="toolbar">
  <svg class="grip first"><use href="#i-grip"/></svg>
  <a class="tb"><svg><use href="#i-new"/></svg></a><a class="tb"><svg><use href="#i-open"/></svg></a><a class="tb"><svg><use href="#i-save"/></svg></a><a class="tb"><svg><use href="#i-saveas"/></svg></a><a class="tb"><svg><use href="#i-composer"/></svg></a><a class="tb"><svg><use href="#i-manager"/></svg></a>
  <svg class="grip g10"><use href="#i-grip"/></svg>
  <a class="tb"><svg><use href="#i-pan"/></svg></a><a class="tb"><svg><use href="#i-pansel"/></svg></a><a class="tb"><svg><use href="#i-zin"/></svg></a><a class="tb"><svg><use href="#i-zout"/></svg></a><a class="tb off"><svg viewBox="0 0 24 24"><use href="#glass"/><text x="9" y="12.500" class="sv-b" font-size="9.500" textLength="12.500">1:1</text></svg></a><a class="tb"><svg><use href="#i-zfull"/></svg></a><a class="tb"><svg><use href="#i-zsel"/></svg></a><a class="tb"><svg><use href="#i-zlay"/></svg></a><a class="tb"><svg><use href="#i-zlast"/></svg></a><a class="tb off"><svg><use href="#i-znext"/></svg></a><a class="tb"><svg><use href="#i-refresh"/></svg></a>
  <svg class="grip g8"><use href="#i-grip"/></svg>
  <a class="tb"><svg viewBox="0 0 24 24"><use href="#i-ident"/><text x="6.500" y="14.500" class="sv-s" font-size="16" font-weight="bold" font-style="italic" fill="#fff">i</text><use href="#cursor" x="14" y="9"/></svg></a><a class="tb wide"><svg class="off"><use href="#i-action"/></svg></a><a class="tb wide"><svg class="big"><use href="#i-select"/></svg></a><a class="tb"><svg><use href="#i-desel"/></svg></a><a class="tb"><svg><use href="#i-expr"/></svg></a><a class="tb"><svg><use href="#i-table"/></svg></a><a class="tb"><svg><use href="#i-abacus"/></svg></a><a class="tb wide"><svg><use href="#i-measure"/></svg></a><a class="tb"><svg><use href="#i-tips"/></svg></a><a class="tb"><svg><use href="#i-bmnew"/></svg></a><a class="tb"><svg><use href="#i-bm"/></svg></a><a class="tb wide"><svg viewBox="0 0 24 24"><use href="#i-annot"/><text x="9.500" y="15" class="sv-s" font-size="13" font-weight="bold" fill="#555">T</text></svg></a>
  <svg class="grip g8"><use href="#i-grip"/></svg>
  <a class="tb"><svg viewBox="0 0 24 24"><use href="#i-help"/><text x="11" y="16" class="sv-s" font-size="14" font-weight="bold" fill="#fff">?</text></svg></a><a class="tb"><svg viewBox="0 0 24 24"><use href="#cursor" transform="translate(1.500 1) scale(1.200)"/><text x="13" y="21.500" class="sv-s" font-size="26" stroke="#000" stroke-width=".5">?</text></svg></a>
</div>

<div class="toolbar">
  <svg class="grip first"><use href="#i-grip"/></svg>
  <a class="tb mini"><svg><use href="#i-edits"/></svg></a><a class="tb on"><svg><use href="#i-toggle"/></svg></a><a class="tb off"><svg><use href="#i-saveed"/></svg></a><a class="tb on"><svg><use href="#i-addline"/></svg></a><a class="tb"><svg><use href="#i-movef"/></svg></a><a class="tb"><svg><use href="#i-node"/></svg></a><a class="tb off2"><svg><use href="#i-del"/></svg></a><a class="tb off2"><svg><use href="#i-cut"/></svg></a><a class="tb off"><svg><use href="#i-copy"/></svg></a><a class="tb"><svg><use href="#i-paste"/></svg></a>
  <svg class="grip g8"><use href="#i-grip"/></svg>
  <a class="tb"><svg viewBox="0 0 24 24"><use href="#i-abc"/><text x="5" y="12.500" class="sv-b" font-size="9" textLength="15.500">abc</text></svg></a><a class="tb"><svg viewBox="0 0 24 24"><use href="#i-abpin"/><text x="5" y="12" class="sv-b" font-size="8">ab</text></svg></a><a class="tb off2"><svg viewBox="0 0 24 24"><use href="#i-abpin2"/><text x="5" y="12.500" class="sv-b" font-size="9">ab</text></svg></a><a class="tb off2"><svg viewBox="0 0 24 24"><use href="#i-abc"/><text x="5" y="12.500" class="sv-b" font-size="9" textLength="15.500">abc</text><use href="#i-eye"/></svg></a><a class="tb off2"><svg viewBox="0 0 24 24"><use href="#i-abc"/><text x="5" y="12.500" class="sv-b" font-size="9" textLength="15.500">abc</text><use href="#b-arr"/></svg></a><a class="tb off2"><svg viewBox="0 0 24 24"><use href="#i-abc"/><text x="5" y="12.500" class="sv-b" font-size="9" textLength="15.500">abc</text><use href="#b-rot"/></svg></a><a class="tb off2"><svg viewBox="0 0 24 24"><use href="#i-abc"/><text x="5" y="12.500" class="sv-b" font-size="9" textLength="15.500">abc</text><use href="#b-pen"/></svg></a>
  <svg class="grip g10"><use href="#i-grip"/></svg>
  <a class="tb"><svg viewBox="0 0 24 24"><use href="#i-csw"/><text x="3.500" y="14" class="sv-m" font-size="10.500">CSW</text></svg></a>
  <svg class="grip g12"><use href="#i-grip"/></svg><svg class="grip g10"><use href="#i-grip"/></svg>
  <a class="tb off2"><svg><use href="#i-h1"/></svg></a><a class="tb off2"><svg><use href="#i-h2"/></svg></a><a class="tb off2"><svg><use href="#i-h3"/></svg></a><a class="tb off2"><svg><use href="#i-h4"/></svg></a><a class="tb off2"><svg><use href="#i-sunup"/></svg></a><a class="tb off2"><svg><use href="#i-sundn"/></svg></a><a class="tb off2"><svg><use href="#i-conup"/></svg></a><a class="tb off2"><svg><use href="#i-condn"/></svg></a><a class="tb"><svg><use href="#i-georef"/></svg></a><a class="tb"><svg><use href="#i-heat"/></svg></a>
</div>

<div class="toolbar">
  <svg class="grip first"><use href="#i-grip"/></svg>
  <a class="tb off"><svg><use href="#i-undo"/></svg></a><a class="tb off"><svg><use href="#i-redo"/></svg></a><a class="tb"><svg><use href="#i-rotf"/></svg></a><a class="tb"><svg><use href="#i-simp"/></svg></a><a class="tb off"><svg><use href="#i-ring"/></svg></a><a class="tb"><svg><use href="#i-part"/></svg></a><a class="tb off"><svg><use href="#i-fillring"/></svg></a><a class="tb off"><svg><use href="#i-delring"/></svg></a><a class="tb"><svg><use href="#i-delpart"/></svg></a><a class="tb"><svg><use href="#i-reshape"/></svg></a><a class="tb"><svg><use href="#i-offset"/></svg></a><a class="tb"><svg><use href="#i-splitf"/></svg></a><a class="tb"><svg><use href="#i-splitp"/></svg></a><a class="tb off2"><svg><use href="#i-merge"/></svg></a><a class="tb off2"><svg><use href="#i-mattr"/></svg></a><a class="tb"><svg><use href="#i-rotp"/></svg></a>
  <svg class="grip g9"><use href="#i-grip"/></svg>
  <a class="tb"><svg><use href="#i-gopen"/></svg></a><a class="tb"><svg><use href="#i-gnew"/></svg></a><a class="tb off"><svg><use href="#i-gclose"/></svg></a>
  <i class="sep"></i>
  <a class="tb"><svg><use href="#i-gvec"/></svg></a><a class="tb"><svg><use href="#i-gras"/></svg></a><a class="tb off"><svg><use href="#i-gvnew"/></svg></a><a class="tb off"><svg><use href="#i-gvedit"/></svg></a><a class="tb off2"><svg><use href="#i-gtools"/></svg></a><a class="tb off2"><svg><use href="#i-gregion"/></svg></a><a class="tb off"><svg><use href="#i-gredit"/></svg></a>
</div>

<main class="body">
  <aside class="side">
    <svg class="hgrip"><use href="#i-hgrip"/></svg>
    <a><svg><use href="#s-vec"/></svg></a><a><svg><use href="#s-ras"/></svg></a><a><svg><use href="#s-pg"/></svg></a><a><svg><use href="#s-lite"/></svg></a><a><svg><use href="#s-ms"/></svg></a><a><svg><use href="#s-wms"/></svg></a><a><svg><use href="#s-wcs"/></svg></a><a><svg><use href="#s-wfs"/></svg></a><a><svg><use href="#s-csv"/></svg></a><a class="drop"><svg><use href="#s-vnew"/></svg></a><a><svg><use href="#s-gps"/></svg></a>
    <svg class="hgrip two"><use href="#i-hgrip"/></svg>
    <a><svg><use href="#s-gps2"/></svg></a><a><svg><use href="#s-tbl"/></svg></a>
  </aside>
  <section class="panel">
    <div class="phead">
      <svg viewBox="0 0 14 14"><circle cx="7" cy="7" r="7" fill="#444"/><path d="M4 4l6 6M10 4l-6 6" stroke="#fff" stroke-width="2"/></svg>
      <svg viewBox="0 0 14 14"><circle cx="7" cy="7" r="7" fill="#444"/><path d="M5.500 3.500h5v4h-5zM3.500 6.500h5v4h-5z" fill="#444" stroke="#fff"/></svg>
      <span>Layers</span>
    </div>
    <div class="ptools">
      <a><svg viewBox="0 0 20 20"><path d="M3.500 7.500h8v9h-8zM5.500 5.500h8v9h-8zM8.500 3.500h8v9h-8z" fill="#fff" stroke="#777"/><path d="M9 5v6c0 2 3 2 3 0V4c0-2-3-2-3 0" fill="none" stroke="#2f5688" stroke-width="1.300"/></svg></a>
      <a><svg viewBox="0 0 20 20"><path d="M3 9c4-5 9-5 13 0-4 4-9 4-13 0z" fill="#e9eef4" stroke="#888"/><circle cx="9.500" cy="8.500" r="3" fill="#4b81b4"/><path d="M2 7c4-5 10-5 15 1" fill="none" stroke="#777"/><path d="M13 13h6l-3 4z" fill="#333"/></svg></a>
      <a><svg viewBox="0 0 20 20"><path d="M3 2.500h15l-5.500 7v7.500h-3.500V9.500z" fill="#3fae5c" stroke="#1c783a"/><path d="M5 4h10" stroke="#8ddd9e"/></svg></a>
      <a><svg viewBox="0 0 20 20"><path d="M2.500 2.500h15v13h-15z" fill="#fff" stroke="#276fc6"/><path d="M2 3.500h16" stroke="#1c65ca" stroke-width="2"/><path d="M5 8h3M5 12h5M5 6v8" stroke="#777"/><path d="M7 6.500h3v3H7zM8 11h3v3H8z" fill="#e89a21"/><path d="M13 5h3v6h2l-3.500 4-3.500-4h2z" fill="#f30e0e"/></svg></a>
      <a><svg viewBox="0 0 20 20"><path d="M2.500 2.500h15v13h-15z" fill="#fff" stroke="#276fc6"/><path d="M2 3.500h16" stroke="#1c65ca" stroke-width="2"/><path d="M5 8h3M5 12h5M5 6v8" stroke="#777"/><path d="M7 6.500h3v3H7zM8 11h3v3H8z" fill="#e89a21"/><path d="M13 15h3V9h2l-3.500-4L11 9h2z" fill="#f30e0e"/></svg></a>
      <a><svg viewBox="0 0 20 20"><path d="M3.500 2.500h13v13h-13z" fill="#ececec" stroke="#aaa" stroke-width="1.300"/><rect x="12.500" y="12.500" width="6" height="5" rx="1" fill="#f06b6b" stroke="#e34444"/><path d="M13.500 15h4" stroke="#fff" stroke-width="1.200"/></svg></a>
    </div>
    <ul class="layers">
      <li class="sel"><svg class="chk"><use href="#i-check"/></svg><svg class="sym" viewBox="0 0 16 16"><path d="M0 8h16" stroke="#5e9b81" stroke-width="1.500"/><path d="M10 1l4 2-6 9-4 3 1-5z" fill="#e7dd8c" stroke="#87834d" stroke-width=".7"/></svg><span>long_lake_manual_contours</span></li>
      <li><svg class="chk"><use href="#i-check"/></svg><svg class="sym" viewBox="0 0 16 16"><circle cx="8" cy="8" r="3" fill="#b75bc0" stroke="#281a2c" stroke-width="1.200"/></svg><span>long_lake_depths</span></li>
      <li><svg class="chk"><use href="#i-check"/></svg><svg class="sym" viewBox="0 0 16 16"><path d="M.5.500h15v15h-15z" fill="#776ca7" stroke="#514b70"/></svg><span>long_lake_outline</span></li>
    </ul>
  </section>
  <svg class="map" viewBox="417 153 1023 710">
    <path d="M417 153h1023v710H417z" fill="#776ca7"/>
    <path d="M616 153l-18 45-11 32 2 63-4 12-16 57-2 8-7 10-37 42-44 56-21 24-41 36V153z" fill="#fff"/>
    <path d="M616 153l-18 45-11 32 2 63-4 12-16 57-2 8-7 10-37 42-44 56-21 24-41 36" fill="none" stroke="#25232c" stroke-width=".9"/>
    <path d="M1059 153L966 266 902 362 835 445 727 577 417 855" fill="none" stroke="#e0152a" stroke-width="1.100"/>
    <path d="M842 225l124 41" stroke="#a9446f" stroke-width="1.100" stroke-dasharray="3 1"/>
    <g fill="#b75bc0" stroke="#201525" stroke-width="1.200"><circle cx="566" cy="370" r="2.700"/><circle cx="640" cy="445" r="2.700"/><circle cx="1059" cy="243" r="2.700"/><circle cx="1071" cy="467" r="2.700"/><circle cx="1362" cy="583" r="2.700"/><circle cx="760" cy="736" r="2.700"/></g>
    <g class="depth"><text x="566" y="367.500">0</text><text x="640" y="443" textLength="16">0.8</text><text x="1059.500" y="241.500" textLength="16">1.6</text><text x="1071" y="464.500" textLength="16">1.8</text><text x="1362" y="581" textLength="16">1.8</text><text x="760" y="734" textLength="16">1.8</text></g>
  </svg>
</main>

<footer class="status">
  <span class="msg">Validation finished.</span>
  <a class="sbtn"><svg viewBox="0 0 20 20"><path d="M5 3l7 13M13 2L8 17" stroke="#444" stroke-width="1.500"/><ellipse cx="8" cy="6" rx="3" ry="4" fill="#999" stroke="#222" stroke-width="1.800"/><ellipse cx="11" cy="13" rx="4" ry="4.500" fill="#ccc" stroke="#222" stroke-width="1.800"/><path d="M3 3l13 13M14 4l3-2M4 11l10-3" stroke="#222" stroke-width="1.500"/></svg></a>
  <span class="coordl">Coordinate:</span><span class="coord">410922.6,5084615.8</span>
  <span class="scalel">Scale</span><span class="scale"><span>1:805</span><i>▾</i></span>
  <svg class="chk"><use href="#i-check"/></svg><span class="render">Render</span><span class="epsg">EPSG:26920</span>
  <a class="sbtn gap"><svg viewBox="0 0 20 20"><circle cx="10" cy="10" r="7" fill="#aaa" stroke="#777" stroke-width="1.500"/><path d="M10 1v18M1 10h18M4 4.500c4 3 8 3 12 0M4 15.500c4-3 8-3 12 0" fill="none" stroke="#666"/><rect x="7" y="7" width="6" height="6" fill="#bbb" stroke="#777"/></svg></a>
  <a class="sbtn"><svg viewBox="0 0 20 20"><path d="M10 4l6.500 12h-13z" fill="#f5f1aa" stroke="#777"/><path d="M10 8v4.500M10 13.500v1.500" stroke="#222" stroke-width="1.700"/></svg></a>
  <svg class="resize" viewBox="0 0 12 12"><path d="M1 12L12 1M5 12l7-7M9 12l3-3" stroke="#777"/></svg>
</footer>
</div>
</body>
</html>
```

FILE: styles.css
```css
* { box-sizing: border-box; }
body { margin: 0; width: 1440px; height: 900px; overflow: hidden; background: #060912; color: #000; font: 12px "Open Sans", "Noto Sans", sans-serif; }
svg { display: block; flex: none; overflow: visible; }
.sprite { position: absolute; width: 0; height: 0; }
.sv-b { font-family: "Liberation Sans", sans-serif; font-weight: bold; fill: #333; }
.sv-s { font-family: "Liberation Serif", serif; }
.sv-m { font-family: "Liberation Mono", monospace; font-weight: bold; fill: #444; }

.menubar { height: 22px; display: flex; align-items: center; background: radial-gradient(circle at 98px 16px, #eef2fb 0 2px, transparent 4px), radial-gradient(circle at 923px 4px, #eef2fb 0 1px, transparent 3px), radial-gradient(ellipse at 1160px 10px, rgba(235,240,252,.8), transparent 150px), linear-gradient(#e1e5ed, #c9ced9 50%, #a5a9b3); border-bottom: 1px solid #080c18; font-size: 14px; }
.apple { width: 15px; height: 17px; margin-left: 20px; }
.menus { display: grid; grid-template-columns: 53px 65px 44px 50px 55px 73px 68px 62px 61px 81px 47px 91px 71px 50px; margin-left: 19px; white-space: nowrap; letter-spacing: .05px; line-height: 20px; -webkit-text-stroke: .2px #000; }
.menus b { letter-spacing: .1px; }
.tray { width: 240px; height: 20px; margin-left: 91px; }
.batt { width: 46px; margin-left: -5px; font-size: 12px; letter-spacing: .5px; }
.clock { width: 107px; letter-spacing: .4px; white-space: nowrap; }
.spot { width: 15px; height: 15px; }

.window { height: 874px; border-radius: 5px 5px 4px 4px; overflow: hidden; background: #ececec; display: flex; flex-direction: column; }
.titlebar { height: 22px; display: flex; align-items: center; padding-left: 8px; gap: 8px; background: linear-gradient(#e6e6e6, #b4b4b4); border-bottom: 1px solid #686868; }
.titlebar span { margin-left: 587px; font-size: 13px; letter-spacing: .35px; color: #2b2b2b; white-space: nowrap; padding-top: 1px; }
.light { width: 12px; height: 12px; border-radius: 50%; box-shadow: inset 0 0 1px 1px rgba(60,30,20,.55), 0 1px 0 #eee; }
.red { background: radial-gradient(circle at 50% 80%, #ffb0ac, #e8413f 65%); }
.amber { background: radial-gradient(circle at 50% 80%, #ffefa5, #eb9b38 70%); }
.green { background: radial-gradient(circle at 50% 80%, #ddffb4, #60b545 70%); }

.toolbar { height: 36px; display: flex; align-items: center; background: linear-gradient(#f0f0f0, #cacaca); border-top: 1px solid #f8f8f8; border-bottom: 1px solid #a5a5a5; }
.tb { width: 38px; height: 34px; display: flex; align-items: center; justify-content: center; flex: none; position: relative; }
.tb svg { width: 24px; height: 24px; }
.tb svg.big { width: 26px; }
.off svg, svg.off { opacity: .42; }
.off2 svg { opacity: .56; }
.wide { width: 50.500px; }
.wide::after { content: ""; position: absolute; left: 38px; top: 20px; border: 4px solid transparent; border-top: 7px solid #555; border-bottom: 0; }
.mini::after { content: ""; position: absolute; left: 26px; top: 25px; border: 3.500px solid transparent; border-top: 4px solid #333; border-bottom: 0; }
.on { width: 34px; margin: 0 2px; border: solid #8a8a8a; border-width: 0 1px; background: linear-gradient(#cfcfcf, #a3a3a3); }
.grip { width: 7px; height: 24px; }
.first { margin: 0 -4px 0 7px; }
.g8 { margin: 0 -4px 0 5px; }
.g9 { margin: 0 -4px 0 6px; }
.g10 { margin: 0 -4px 0 7px; }
.g12 { margin: 0 -1px 0 6px; }
.sep { width: 10px; height: 32px; background: repeating-linear-gradient(#777 0 1px, transparent 1px 3px) 4px 0 / 1px 100% no-repeat; }

.body { flex: 1; display: flex; min-height: 0; border-top: 1px solid #8d8d8d; border-bottom: 1px solid #b2b2b2; }
.side { width: 48px; flex: none; background: linear-gradient(90deg, #ededed, #c9c9c9); border-right: 1px solid #a0a0a0; display: flex; flex-direction: column; }
.side a { height: 38px; flex: none; display: flex; justify-content: center; padding: 6px 0 0 1px; position: relative; }
.side a svg { width: 24px; height: 26px; }
.hgrip { width: 36px; height: 6px; margin: 6px 0 -3px 8px; }
.two { margin: 5px 0 -2px 8px; }
.drop::after { content: ""; position: absolute; left: 38px; top: 21px; border: 4px solid transparent; border-top: 7px solid #555; border-bottom: 0; }
.panel { width: 369px; flex: none; display: flex; flex-direction: column; border-right: 2px solid #949494; background: #fff; }
.phead { height: 25px; display: flex; align-items: center; padding: 0 0 3px 3px; gap: 6px; background: linear-gradient(#eeeeee, #c9c9c9); border-bottom: 1px solid #a5a5a5; }
.phead svg { width: 14px; height: 14px; }
.phead span { margin-left: 143px; font-size: 11.500px; letter-spacing: -.2px; padding-top: 2px; }
.ptools { height: 37px; display: flex; gap: 8px; padding: 0 5px; background: #ececec; border-bottom: 1px solid #8e8e8e; }
.ptools a { width: 26px; height: 26px; border: 1px solid #999; background: linear-gradient(#fff, #e8e8e8); display: flex; align-items: center; justify-content: center; }
.ptools svg { width: 20px; height: 20px; }
.layers { list-style: none; margin: 0; padding: 0; flex: 1; border-left: 1px solid #aaa; border-right: 1px solid #ddd; }
.layers li { height: 20px; display: flex; align-items: center; padding-left: 27px; font-size: 13px; font-weight: bold; }
.layers span { margin-left: 6px; letter-spacing: .26px; line-height: 20px; padding-bottom: 1px; }
.sel { background: #3874d7; color: #fff; }
.sel span { text-decoration: underline; text-underline-offset: 2px; }
.chk { width: 18px; height: 16px; margin-top: -3px; }
.sym { width: 16px; height: 16px; margin-left: 9px; }
.map { width: 1023px; height: 710px; overflow: hidden; }
.depth { font: 11px "Noto Sans", sans-serif; paint-order: stroke; stroke: #fff; stroke-width: 2.500px; stroke-linejoin: round; }

.status { height: 33px; flex: none; display: flex; align-items: center; font-size: 13px; background: #ececec; white-space: nowrap; padding-top: 1px; }
.msg { width: 643px; padding-left: 6px; letter-spacing: .27px; }
.sbtn { width: 20px; height: 20px; margin-left: 6px; border: 1px solid #999; background: linear-gradient(#fff, #ddd); }
.sbtn svg { width: 18px; height: 18px; }
.sbtn.gap { margin-left: 0; }
.coordl { width: 83px; margin-left: 9px; letter-spacing: .2px; }
.coord { width: 300px; height: 20px; line-height: 18px; text-align: center; background: #fff; border: 1px solid #bbb; border-top-color: #888; letter-spacing: .8px; }
.scalel { width: 36px; margin-left: 9px; }
.scale { width: 94px; height: 15px; margin: 2px 0 0 9px; display: flex; justify-content: space-between; align-items: center; background: #fff; border: 1px solid #999; border-radius: 0 3px 3px 0; padding-left: 2px; letter-spacing: .5px; }
.scale i { width: 13px; height: 13px; border-left: 1px solid #bbb; font: 9px/12px "DejaVu Sans", sans-serif; text-align: center; }
.status .chk { margin-left: 5px; }
.render { width: 48px; margin-left: 1px; }
.epsg { width: 85px; margin-left: 2px; color: #444; letter-spacing: .35px; }
.resize { width: 12px; height: 12px; margin-left: 13px; align-self: flex-end; }
```
